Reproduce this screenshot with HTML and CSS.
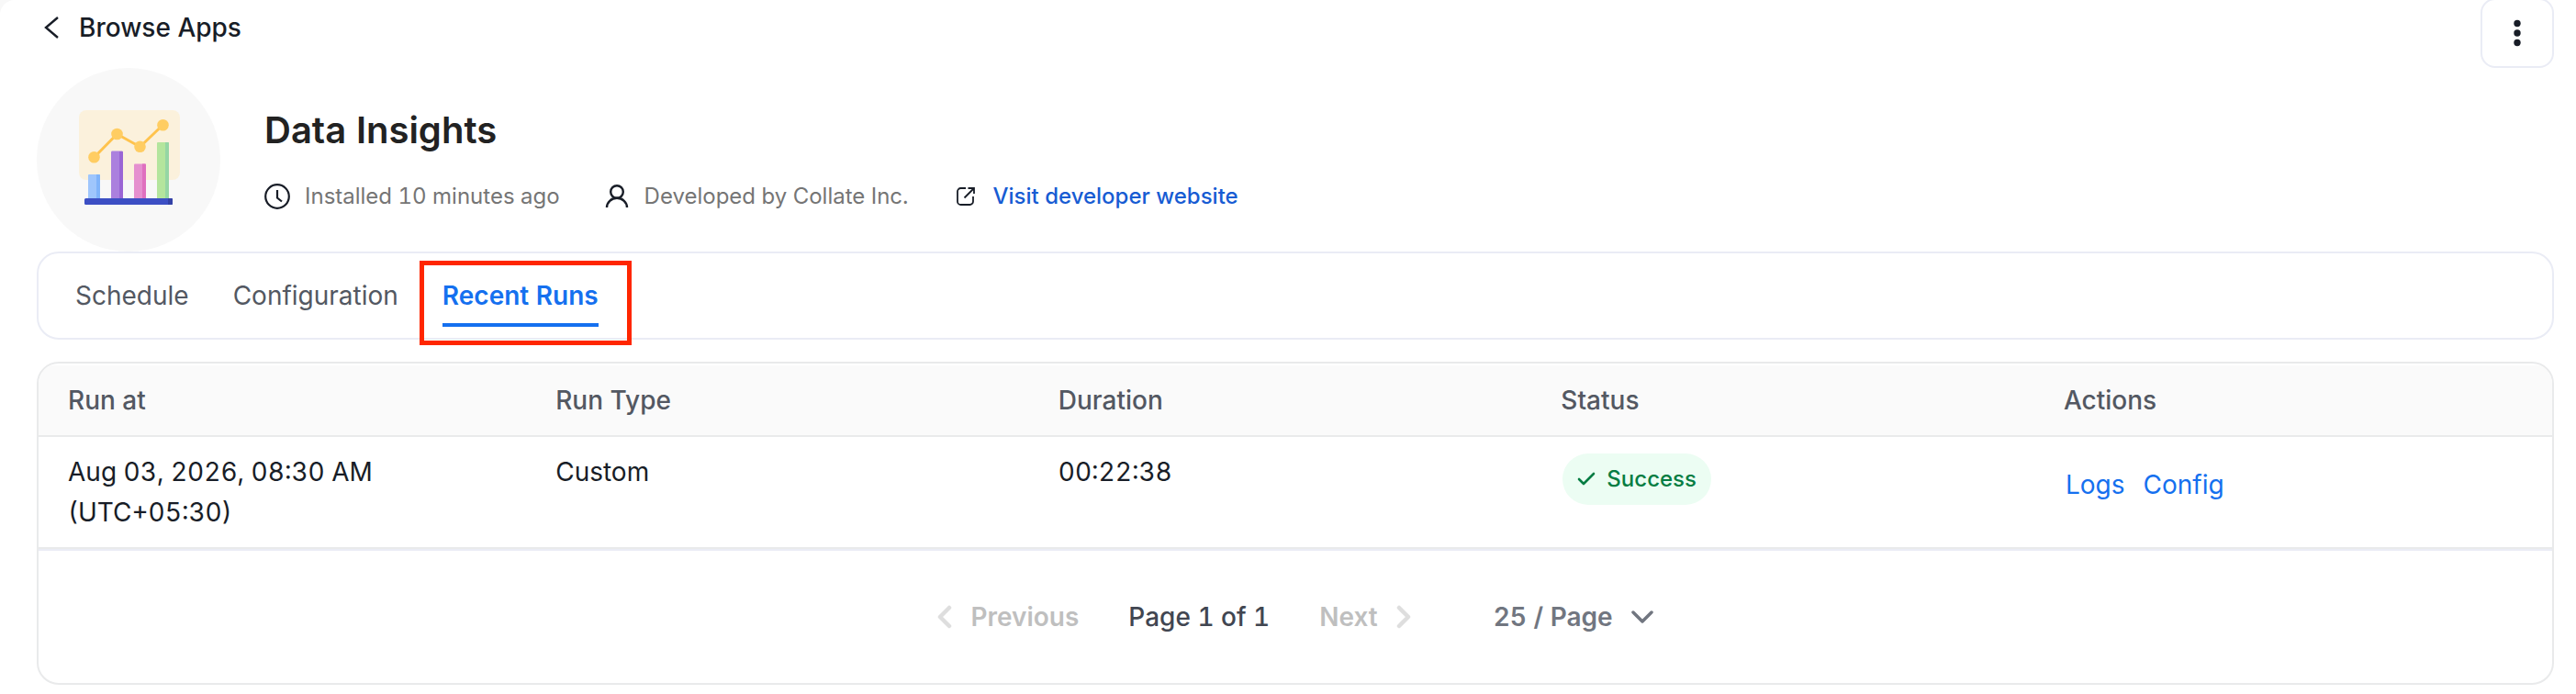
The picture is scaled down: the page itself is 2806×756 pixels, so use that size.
FILE: index.html
```html
<!DOCTYPE html>
<html lang="en">
<head>
    <meta charset="UTF-8">
    <meta name="viewport" content="width=device-width, initial-scale=1.0">
    <title>Data Insights</title>
    <link rel="stylesheet" href="styles.css">
</head>
<body>
    <main class="page">
        <header class="topbar">
            <a class="back" href="#">
                <svg width="16" height="28" viewBox="0 0 16 28" fill="none" stroke="currentColor" stroke-width="2.4"><path d="M15 3 2 14l13 11"/></svg>
                Browse Apps
            </a>
            <button class="menu" type="button" aria-label="More options">
                <svg width="8" height="30" viewBox="0 0 8 30" fill="currentColor"><circle cx="4" cy="4.500" r="3.7"/><circle cx="4" cy="15" r="3.7"/><circle cx="4" cy="25.500" r="3.7"/></svg>
            </button>
        </header>

        <section class="app">
            <div class="app-logo">
                <svg width="112" height="108" viewBox="-2 0 112 108">
                    <rect width="110" height="76" rx="8" fill="#fbf1dc"/>
                    <path d="M16.500 51.500 41.500 26l25 14 25-24" fill="none" stroke="#ffc34d" stroke-width="3"/>
                    <g fill="#ffcd62"><circle cx="16.500" cy="51.300" r="6.300"/><circle cx="41.500" cy="26" r="6.300"/><circle cx="66.500" cy="39.700" r="6.300"/><circle cx="91.500" cy="16.200" r="6.300"/></g>
                    <path d="M10 98V71q0-1 1-1h11q1 0 1 1v27z" fill="#9fc6fc"/><path d="M19 98V70h3q1 0 1 1v27z" fill="#80b4fa"/>
                    <path d="M35 98V46q0-1.500 1-1.500h11q1 0 1 1.500v52z" fill="#ab80de"/><path d="M44 98V45h3q1 0 1 1v52z" fill="#9a65d5"/>
                    <path d="M60 98V59.500q0-1 1-1h11q1 0 1 1V98z" fill="#e590cf"/><path d="M69 98V58.500h3q1 0 1 1V98z" fill="#df70bf"/>
                    <path d="M85 98V36q0-1 1-1h11q1 0 1 1v62z" fill="#b4e59d"/><path d="M94 98V35h3q1 0 1 1v62z" fill="#95d6a4"/>
                    <rect x="6" y="96" width="96" height="7" rx="1.500" fill="#3c4fc4"/>
                    <path d="M97 96h4q1 0 1 1v5q0 1-1 1h-4z" fill="#3341a6"/>
                </svg>
            </div>
            <div class="app-info">
                <h1>Data Insights</h1>
                <div class="meta">
                    <span class="meta-item">
                        <svg width="28" height="28" viewBox="0 0 28 28" fill="none" stroke="#181d27" stroke-width="2.200"><circle cx="14" cy="14" r="12.800"/><path d="M14 7v8.500l5 4"/></svg>
                        Installed 10 minutes ago
                    </span>
                    <span class="meta-item">
                        <svg width="28" height="28" viewBox="0 0 28 28" fill="none" stroke="#181d27" stroke-width="2.400"><circle cx="14" cy="9" r="6.800"/><path d="M3 26a11 10.200 0 0 1 22 0"/></svg>
                        Developed by Collate Inc.
                    </span>
                    <span class="meta-item">
                        <svg width="28" height="28" viewBox="0 0 28 28" fill="none" stroke="#181d27" stroke-width="1.800"><path d="M14 5H8.500A3.500 3.500 0 0 0 5 8.500v11A3.500 3.500 0 0 0 8.500 23h10a3.500 3.500 0 0 0 3.500-3.500V14M16.500 5h6.500v6M23 5 12.500 15.500"/></svg>
                        <a class="site" href="#">Visit developer website</a>
                    </span>
                </div>
            </div>
        </section>

        <nav class="tabs">
            <a class="tab" href="#">Schedule</a>
            <a class="tab" href="#">Configuration</a>
            <a class="tab active" href="#">Recent Runs</a>
        </nav>

        <section class="runs">
            <table>
                <thead>
                    <tr>
                        <th class="col-run">Run at</th>
                        <th class="col">Run Type</th>
                        <th class="col">Duration</th>
                        <th class="col">Status</th>
                        <th>Actions</th>
                    </tr>
                </thead>
                <tbody>
                    <tr>
                        <td>Aug 03, 2026, 08:30 AM<br>(UTC+05:30)</td>
                        <td>Custom</td>
                        <td>00:22:38</td>
                        <td>
                            <span class="badge">
                                <svg width="20" height="16" viewBox="0 0 20 16" fill="none" stroke="currentColor" stroke-width="2.600" stroke-linecap="round" stroke-linejoin="round"><path d="m2 8 5 5L18 2"/></svg>
                                Success
                            </span>
                        </td>
                        <td>
                            <div class="actions">
                                <button type="button">Logs</button>
                                <button type="button">Config</button>
                            </div>
                        </td>
                    </tr>
                </tbody>
            </table>
            <div class="pagination">
                <button class="step" type="button" disabled>
                    <svg width="16" height="26" viewBox="0 0 16 26" fill="none" stroke="#dedede" stroke-width="4.500" stroke-linecap="round" stroke-linejoin="round"><path d="M13 3 3 13l10 10"/></svg>
                    Previous
                </button>
                <span class="current">Page 1 of 1</span>
                <button class="step" type="button" disabled>
                    Next
                    <svg width="16" height="26" viewBox="0 0 16 26" fill="none" stroke="#dedede" stroke-width="4.500" stroke-linecap="round" stroke-linejoin="round"><path d="m3 3 10 10L3 23"/></svg>
                </button>
                <button class="size" type="button">
                    25 / Page
                    <svg width="24" height="14" viewBox="0 0 24 14" fill="none" stroke="currentColor" stroke-width="3.500" stroke-linecap="round" stroke-linejoin="round"><path d="m2 2 10 10L22 2"/></svg>
                </button>
            </div>
        </section>
    </main>
</body>
</html>
```
FILE: styles.css
```css
* {
    box-sizing: border-box;
}
body {
    margin: 0;
    background-color: #f8f8f8;
    color: #181d27;
    font-family: Inter, "Liberation Sans", sans-serif;
    font-size: 28px;
    font-variant-numeric: tabular-nums;
    line-height: 44px;
}
a {
    text-decoration: none;
}
button {
    padding: 0;
    border: none;
    background: none;
    color: inherit;
    font: inherit;
    font-variant-numeric: tabular-nums;
    cursor: pointer;
}
svg {
    flex: none;
}
.page {
    min-height: 100vh;
    padding: 0 24px 10px 40px;
    background-color: #ffffff;
    border-top-left-radius: 16px;
}
.topbar {
    display: flex;
    justify-content: space-between;
    height: 74px;
}
.back {
    display: flex;
    align-items: center;
    align-self: flex-start;
    gap: 22px;
    margin-top: 8px;
    padding-left: 8px;
    color: #181d27;
    font-weight: 500;
}
.menu {
    display: flex;
    align-items: center;
    justify-content: center;
    width: 80px;
    height: 76px;
    margin-top: -2px;
    border: 2px solid #eaecf5;
    border-radius: 16px;
}
.app {
    display: flex;
    align-items: center;
    gap: 48px;
}
.app-logo {
    display: flex;
    align-items: center;
    justify-content: center;
    width: 200px;
    height: 200px;
    border-radius: 50%;
    background-color: #f8f8f8;
}
h1 {
    margin: 0 0 20px;
    color: #222222;
    font-size: 40px;
    font-weight: 600;
    line-height: 60px;
}
.meta {
    display: flex;
    gap: 48px;
    font-size: 24px;
}
.meta-item {
    display: flex;
    align-items: center;
    gap: 16px;
    color: #757575;
}
.site {
    color: #175cd3;
    font-weight: 500;
}
.tabs {
    display: flex;
    gap: 48px;
    padding: 24px 40px 12px;
    border: 2px solid #eaecf5;
    border-radius: 24px;
}
.tab {
    position: relative;
    padding-bottom: 8px;
    border-bottom: 4px solid transparent;
    color: #535862;
}
.active {
    border-color: #1570ef;
    color: #1570ef;
    font-weight: 600;
}
/* highlight frame round the selected tab */
.active::after {
    content: "";
    position: absolute;
    inset: -16px -36px -24px -25px;
    border: 5px solid #ff2600;
}
.runs {
    margin-top: 24px;
    padding-top: 2px;
    border: 2px solid #e9eaeb;
    border-radius: 24px;
    overflow: hidden;
}
table {
    width: 100%;
    border-collapse: collapse;
    table-layout: fixed;
}
.col-run {
    width: 19.4%;
}
.col {
    width: 20%;
}
th,
td {
    padding: 16px 32px;
    border-bottom: 2px solid #e9eaeb;
    text-align: left;
    vertical-align: top;
}
th {
    background-color: #fafafa;
    color: #535862;
    font-weight: 500;
}
.badge {
    display: inline-flex;
    align-items: center;
    gap: 12px;
    margin: 2px;
    padding: 6px 16px;
    border-radius: 28px;
    background-color: #ecfdf3;
    color: #067d43;
    font-size: 24px;
    font-weight: 500;
}
.actions {
    display: flex;
    gap: 20px;
    padding: 14px 2px 0;
    color: #1570ef;
}
.pagination {
    display: flex;
    align-items: center;
    justify-content: center;
    padding: 50px 0;
    border-top: 2px solid #eaecf5;
}
.step,
.size {
    display: flex;
    align-items: center;
    gap: 20px;
    font-weight: 600;
}
.step {
    color: #bfbfbf;
}
.current {
    margin: 0 54px;
    color: #414651;
    font-weight: 500;
}
.size {
    margin-left: 90px;
    color: #717680;
}
```
